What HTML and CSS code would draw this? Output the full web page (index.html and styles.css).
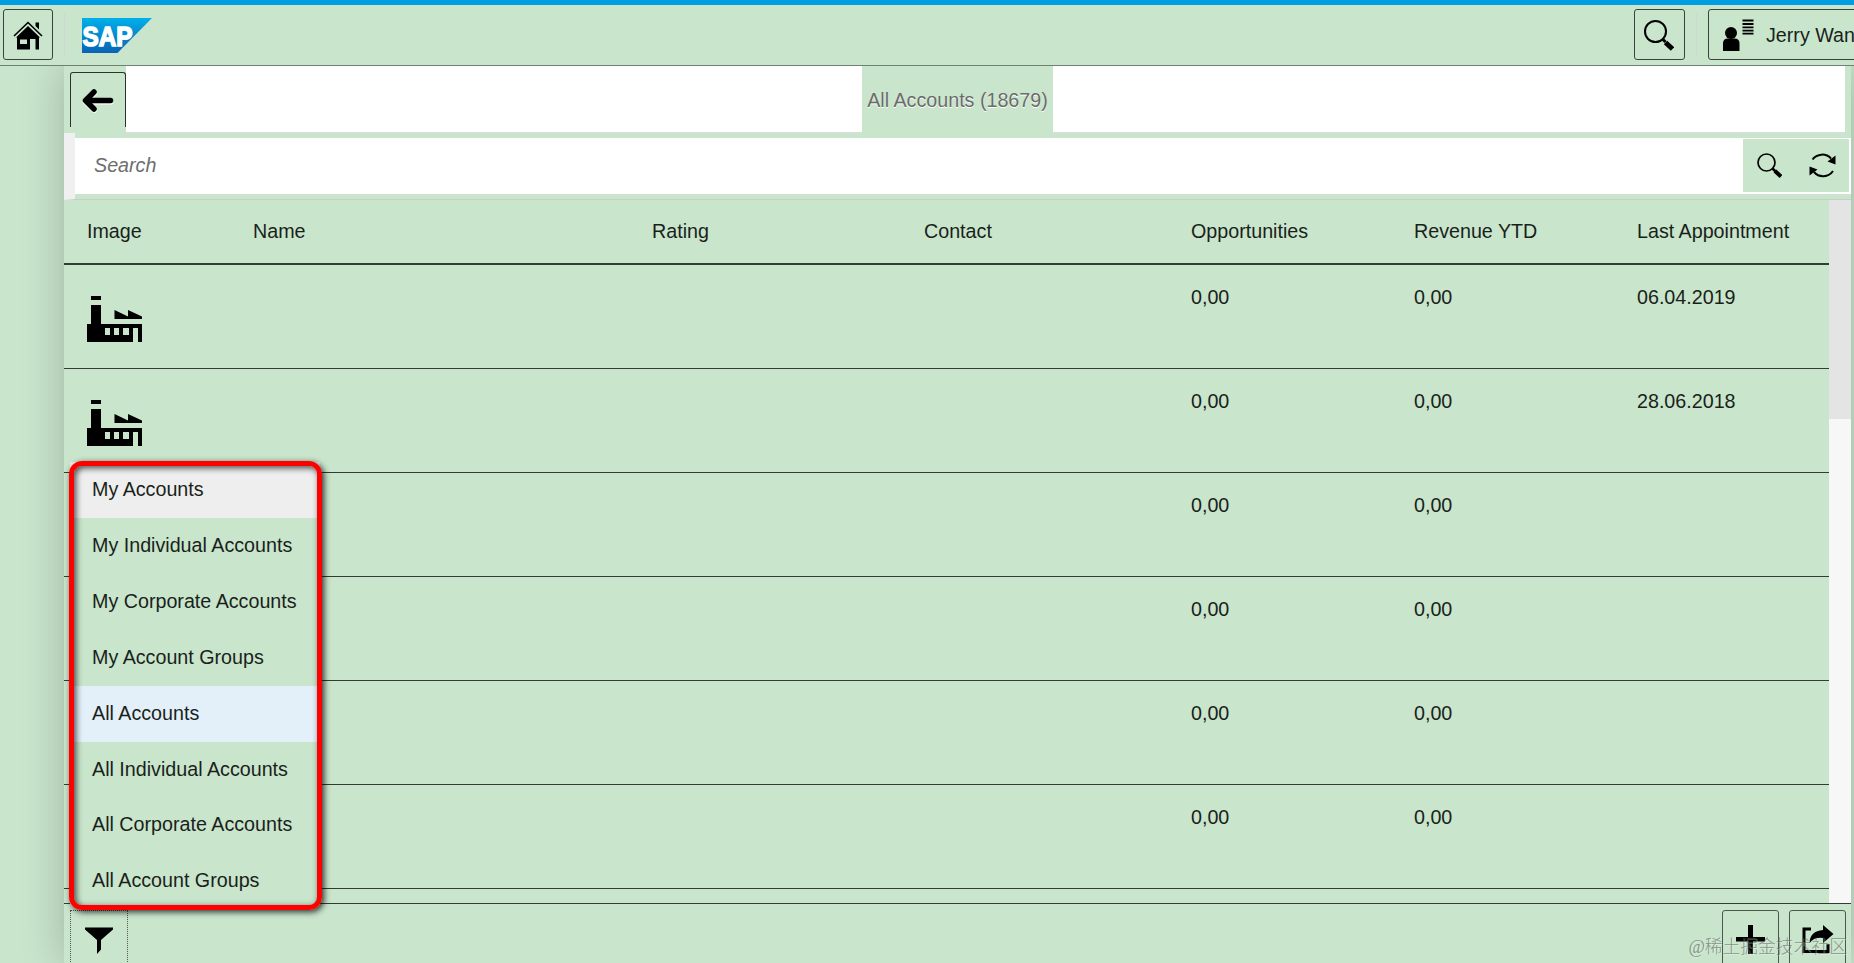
FILE: index.html
```html
<!DOCTYPE html>
<html lang="en">
<head>
    <meta charset="UTF-8">
    <meta name="viewport" content="width=device-width, initial-scale=1.0">
    <title>All Accounts</title>
    <link rel="stylesheet" href="styles.css">
</head>
<body>

<!-- Shell header -->
<header class="shell-header">
    <button class="shell-btn home-btn">
        <svg width="30" height="30" viewBox="0 0 30 30"><path d="M1 15 15 1.500 29 15" fill="none" stroke="#000" stroke-width="1.600"/><path d="M15 5 3 16.500h1V28.500H17V18H22.500v10.500H26V16.500h1zM7 18.500h7v4.500H7z" fill-rule="evenodd"/><path d="M22.500 1.500h3.500v7l-3.500-3.500z"/></svg>
    </button>
    <span class="divider"></span>
    <svg class="logo" width="70" height="35" viewBox="0 0 70 35">
        <defs><linearGradient id="sap" x1="0" y1="0" x2="0" y2="1"><stop offset="0" stop-color="#00b0ea"/><stop offset="1" stop-color="#0a63b5"/></linearGradient></defs>
        <path d="M0 0H70L35.500 35H0z" fill="url(#sap)"/>
        <text x="0.500" y="27.500" textLength="50" lengthAdjust="spacingAndGlyphs" class="logo-text">SAP</text>
    </svg>
    <span class="spacer"></span>
    <button class="shell-btn find-btn">
        <svg width="30" height="31" viewBox="0 0 30 31"><circle cx="11.500" cy="11.500" r="10.500" fill="none" stroke="#000" stroke-width="2"/><path d="m18.500 19 3 3" stroke="#000" stroke-width="3"/><path d="m21.500 22.500 7 6.500" stroke="#000" stroke-width="5"/></svg>
    </button>
    <span class="divider"></span>
    <button class="shell-btn user-btn">
        <svg width="32" height="33" viewBox="0 0 32 33"><circle cx="9" cy="14" r="6"/><path d="M1 32V24.500Q1 19.500 6 19.500h6.500q5 0 5 5V32z"/><path d="M20.500 1.500h11M20.500 5h11M20.500 8.300h11M20.500 11.600h11M20.500 14.700h11" stroke="#000" stroke-width="1.800"/></svg>
        <span>Jerry Wan</span>
    </button>
</header>

<!-- Account list page -->
<main class="page">
    <div class="title-bar">
        <button class="back-btn">
            <svg width="32" height="24" viewBox="0 0 32 24"><path d="M4 12H28.500M12.500 3.500 3.500 12l9 8.500" fill="none" stroke="#fff" stroke-opacity=".7" stroke-width="5.500" stroke-linecap="round" stroke-linejoin="round" transform="translate(0 1)"/><path d="M4 11.500H28.500M12 3 3.500 11.500 12 20" fill="none" stroke="#000" stroke-width="5.500" stroke-linecap="round" stroke-linejoin="round"/></svg>
        </button>
        <div class="title-fill"></div>
        <h1 class="title">All Accounts (18679)</h1>
        <div class="title-fill"></div>
    </div>

    <div class="search-bar">
        <div class="search-field">
            <span class="placeholder">Search</span>
            <div class="search-actions">
                <svg width="25" height="25" viewBox="0 0 25 25"><circle cx="9.500" cy="9.500" r="8.500" fill="none" stroke="#000" stroke-width="1.700"/><path d="m15.500 15.500 3 3" stroke="#000" stroke-width="2.500"/><path d="m18 18 6 5.500" stroke="#000" stroke-width="4"/></svg>
                <svg width="27" height="27" viewBox="0 0 27 27"><path d="M3.500 7.500A12 12 0 0 1 22 6.500M24 19A12 12 0 0 1 5 20" fill="none" stroke="#000" stroke-width="2"/><path d="M26.500 3.500v9l-8-3zM.500 14.500v9l8-6z"/></svg>
            </div>
        </div>
    </div>

    <div class="content">
        <div class="table">
            <div class="row head">
                <span>Image</span><span>Name</span><span>Rating</span><span>Contact</span><span>Opportunities</span><span>Revenue YTD</span><span>Last Appointment</span>
            </div>
            <div class="row">
                <svg class="factory" width="55" height="46" viewBox="0 0 55 46"><path d="M4 0h10v4H4zM4 9h10v19h41v18h-4V32h-5v14H0V28h4zM27.500 14 41 20.500V14l14 6.500V23H27.500zM18 32v7h5v-7zM27 32v7h5v-7zM36 32v7h6v-7z" fill-rule="evenodd"/></svg>
                <span></span><span></span><span></span><span>0,00</span><span>0,00</span><span>06.04.2019</span>
            </div>
            <div class="row">
                <svg class="factory" width="55" height="46" viewBox="0 0 55 46"><path d="M4 0h10v4H4zM4 9h10v19h41v18h-4V32h-5v14H0V28h4zM27.500 14 41 20.500V14l14 6.500V23H27.500zM18 32v7h5v-7zM27 32v7h5v-7zM36 32v7h6v-7z" fill-rule="evenodd"/></svg>
                <span></span><span></span><span></span><span>0,00</span><span>0,00</span><span>28.06.2018</span>
            </div>
            <div class="row"><span></span><span></span><span></span><span></span><span>0,00</span><span>0,00</span><span></span></div>
            <div class="row"><span></span><span></span><span></span><span></span><span>0,00</span><span>0,00</span><span></span></div>
            <div class="row"><span></span><span></span><span></span><span></span><span>0,00</span><span>0,00</span><span></span></div>
            <div class="row"><span></span><span></span><span></span><span></span><span>0,00</span><span>0,00</span><span></span></div>
        </div>
        <div class="scrollbar"><div class="thumb"></div></div>
    </div>

    <footer class="footer">
        <button class="foot-btn filter-btn">
            <svg width="28" height="28" viewBox="0 0 28 28"><path d="M0 .500h28v2L16 13v9.500L12 27V13L0 2.500z"/></svg>
        </button>
        <span class="spacer"></span>
        <button class="foot-btn">
            <svg width="29" height="29" viewBox="0 0 29 29"><path d="M12 0h5v12h12v4.500H17V29h-5V16.500H0V12h12z"/></svg>
        </button>
        <button class="foot-btn">
            <svg width="32" height="28" viewBox="0 0 32 28"><path d="M9 4H2v22.500h24V19" fill="none" stroke="#000" stroke-width="3"/><path d="M21 0l10.500 9L21 18v-5q-9-1-13.500 5Q8 6 21 5z"/></svg>
        </button>
    </footer>
</main>

<!-- Filter menu -->
<ul class="menu">
    <li class="hover">My Accounts</li>
    <li>My Individual Accounts</li>
    <li>My Corporate Accounts</li>
    <li>My Account Groups</li>
    <li class="selected">All Accounts</li>
    <li class="short">All Individual Accounts</li>
    <li>All Corporate Accounts</li>
    <li>All Account Groups</li>
</ul>
<div class="menu-frame"></div>

<div class="watermark">@稀土掘金技术社区</div>

</body>
</html>
```
FILE: styles.css
```css
* {
    box-sizing: border-box;
}
body {
    margin: 0;
    width: 1854px;
    height: 963px;
    overflow: hidden;
    position: relative;
    display: flex;
    flex-direction: column;
    background: #c9e5cc;
    color: #1a1f1b;
    font-family: "Liberation Sans", Arial, sans-serif;
    font-size: 19.7px;
}
button {
    font: inherit;
    color: inherit;
    background: #c9e5cc;
    padding: 0;
    flex-shrink: 0;
}
svg {
    display: block;
    flex-shrink: 0;
}
.spacer {
    flex: 1;
}

/* Shell header */
.shell-header {
    height: 66px;
    flex-shrink: 0;
    border-top: 5px solid #009de0;
    border-bottom: 1px solid #6f8271;
    display: flex;
    align-items: flex-start;
    padding: 4px 0 0 3px;
    overflow: hidden;
}
.shell-btn {
    height: 51px;
    border: 1px solid #3a433b;
    border-radius: 3px;
    display: flex;
    align-items: center;
    white-space: nowrap;
}
.home-btn {
    width: 50px;
    padding: 2px 0 0 9px;
}
.divider {
    width: 1px;
    height: 44px;
    margin: 4px 17px 0 11px;
    background: #d2d4d6;
}
.logo {
    margin-top: 9px;
}
.logo-text {
    font-size: 27px;
    font-weight: bold;
    fill: #fff;
    stroke: #fff;
    stroke-width: 1.6px;
}
.find-btn {
    width: 51px;
    padding: 2px 0 0 9px;
}
.find-btn + .divider {
    margin-right: 11px;
}
.user-btn {
    width: 160px;
    margin-right: -14px;
    padding: 2px 0 0 13px;
    gap: 12px;
}

/* Page */
.page {
    flex: 1;
    min-height: 0;
    margin: 0 3px 0 64px;
    display: flex;
    flex-direction: column;
    box-shadow: 0 0 40px rgba(0, 0, 0, 0.22);
    clip-path: inset(0 -3px 0 -64px);
    background: #c9e5cc;
}
.title-bar {
    height: 67px;
    flex-shrink: 0;
    display: flex;
    align-items: flex-start;
    padding: 0 6px;
}
.back-btn {
    width: 56px;
    height: 55px;
    margin-top: 6px;
    border: 1px solid #2c332d;
    border-bottom: 0;
    border-radius: 3px 3px 0 0;
    padding: 1px 0 0 11px;
}
.title-fill {
    height: 67px;
    width: 736px;
    background: #fff;
    border-bottom: 1px solid #dcdcdc;
}
.title-fill:last-child {
    width: 792px;
}
.title {
    margin: 0;
    width: 191px;
    line-height: 69px;
    text-align: center;
    font-size: 19.7px;
    font-weight: normal;
    color: #6b6b6b;
    text-shadow: 0 1px 0 #fff;
    white-space: nowrap;
}
.search-bar {
    height: 67px;
    flex-shrink: 0;
    padding: 5px 0;
    border-left: 11px solid #f0f0f0;
    border-bottom: 1px solid #cccccc;
}
.search-field {
    height: 56px;
    background: #fff;
    display: flex;
    justify-content: space-between;
    padding: 1px 2px 2px 19px;
}
.placeholder {
    font-style: italic;
    color: #6e6e6e;
    line-height: 52px;
}
.search-actions {
    width: 106px;
    background: #c9e5cc;
    display: flex;
    align-items: center;
    gap: 27px;
    padding-left: 14px;
}

/* Table */
.content {
    height: 703px;
    flex-shrink: 0;
    display: flex;
    overflow: hidden;
}
.table {
    width: 1765px;
}
.row {
    height: 104px;
    padding: 21px 0 0 23px;
    border-bottom: 1px solid #333c34;
    display: grid;
    grid-template-columns: 166px 399px 272px 267px 223px 223px 1fr;
    line-height: 22px;
    white-space: nowrap;
}
.head {
    height: 65px;
    padding-top: 20px;
    border-bottom-width: 2px;
}
.factory {
    margin-top: 10px;
}
.scrollbar {
    width: 22px;
    background: #f7f7f7;
}
.thumb {
    height: 219px;
    background: #e4e4e4;
}

/* Footer */
.footer {
    flex: 1;
    border-top: 1px solid #333c34;
    display: flex;
    padding: 6px 5px 0 6px;
    gap: 10px;
}
.foot-btn {
    width: 57px;
    height: 60px;
    border: 1px solid #4b574c;
    border-radius: 3px 3px 0 0;
    display: flex;
    justify-content: center;
    padding-top: 14px;
}
.filter-btn {
    width: 58px;
    border: 1px dotted #555;
    border-radius: 0;
    padding-top: 16px;
}

/* Filter menu */
.menu {
    position: absolute;
    left: 70px;
    top: 462px;
    width: 250px;
    height: 447px;
    margin: 0;
    padding: 0;
    list-style: none;
    background: #c9e5cc;
}
.menu li {
    height: 56px;
    line-height: 54px;
    padding-left: 22px;
}
.menu .short {
    height: 55px;
}
.menu .hover {
    background: #eeeeee;
}
.menu .selected {
    background: #e3f0f9;
}
.menu-frame {
    position: absolute;
    left: 69px;
    top: 461px;
    width: 253px;
    height: 449px;
    border: 5px solid #ff0000;
    border-radius: 13px;
    box-shadow: 2px 2px 6px rgba(0, 0, 0, 0.8), inset 2px 2px 6px rgba(0, 0, 0, 0.7);
}

.watermark {
    position: absolute;
    right: 7px;
    bottom: 4px;
    font-family: "Liberation Serif", "Noto Sans CJK SC", sans-serif;
    font-size: 17.8px;
    font-weight: 300;
    line-height: 24px;
    color: rgba(90, 100, 92, 0.65);
    text-shadow: 1px 1px 0 rgba(255, 255, 255, 0.3);
}
```
